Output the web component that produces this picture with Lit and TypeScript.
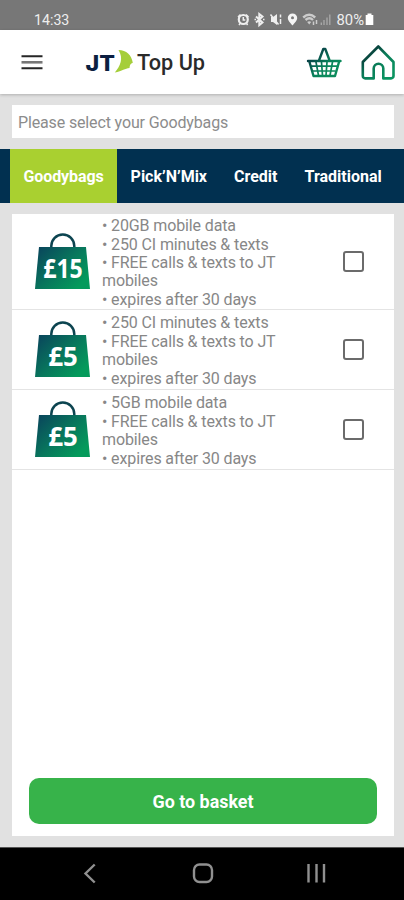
import { LitElement, html, css, svg } from "lit";
import { customElement, property, state } from "lit/decorators.js";
import { classMap } from "lit/directives/class-map.js";

interface Bag {
  price: string;
  lines: string[];
}

const TABS = [
  { id: "goody", label: "Goodybags" },
  { id: "mix", label: "Pick’N’Mix" },
  { id: "credit", label: "Credit" },
  { id: "trad", label: "Traditional" },
];

const BAGS: Bag[] = [
  { price: "£15", lines: ["20GB mobile data", "250 CI minutes & texts", "FREE calls & texts to JT mobiles", "expires after 30 days"] },
  { price: "£5", lines: ["250 CI minutes & texts", "FREE calls & texts to JT mobiles", "expires after 30 days"] },
  { price: "£5", lines: ["5GB mobile data", "FREE calls & texts to JT mobiles", "expires after 30 days"] },
];

@customElement("status-bar")
class StatusBar extends LitElement {
  static styles = css`
    :host { display: flex; height: 30px; box-sizing: border-box; padding: 9px 30px 0 34px; justify-content: space-between;
      background: #777; color: #eee; font: 14.2px/22px Roboto, sans-serif; }
    .right { display: flex; }
    .icons { display: block; margin-right: 5px; }
    .pct { font-size: 14.8px; }
    .battery { display: block; margin-left: 1px; }
  `;
  render() {
    return html`<span>14:33</span>
      <div class="right">
        <svg class="icons" width="97" height="20" viewBox="235 9 97 20" fill="none" stroke="#eee" stroke-width="1.5">
          <path d="M238 17 240.500 14.500M248.500 17 246 14.500" />
          <circle cx="243.300" cy="19.500" r="4.500" stroke-width="2.200" />
          <path d="M243.300 17v3h2M240 23.500l-1 1.500M246.600 23.500l1 1.500" />
          <path d="M256 16.500l6.500 6-3.200 2.700V14l3.200 2.500-6.500 6" stroke-width="2" />
          <path d="M254.500 19.500h1.500M263 19.500h1.500" />
          <path d="M271 17h2l4-3v11l-4-3h-2z" fill="#eee" stroke="none" />
          <path d="M270.500 14.500l8 10M280.500 14.500v3M280.500 19v5" />
          <path d="M292.500 13.400a4.700 4.700 0 0 0-4.700 4.700c0 3 4.700 7.400 4.700 7.400s4.700-4.400 4.700-7.400a4.700 4.700 0 0 0-4.700-4.700z" fill="#f4f4f4" stroke="none" />
          <circle cx="292.500" cy="17.800" r="1.500" fill="#777" stroke="none" />
          <g stroke="#ccc"><path d="M303.200 17.500q6-5.500 12 0M305.500 20q4-3.500 7.500 0" stroke-width="2.400" /><path d="M309.200 24.500l-2-2.500q2-1.500 4 0z" fill="#ccc" stroke="none" /><path d="M313.500 21.500v3.500M316.500 20v4" /></g>
          <g stroke="#aaa"><path d="M321.300 22.500v2.500M324 20v5M327 17.500v7.500M329.800 14.500v10.500" stroke-width="1.300" /></g>
        </svg>
        <span class="pct">80%</span>
        <svg class="battery" width="9" height="18" viewBox="0 0 9 18"><path d="M2.500 4.500h4v1.500H8.300V16H.7V6H2.500z" fill="#fff" /></svg>
      </div>`;
  }
}

@customElement("app-header")
class AppHeader extends LitElement {
  static styles = css`
    :host { display: flex; height: 64px; box-sizing: border-box; align-items: center; padding: 0 8px 0 21px; background: #fff;
      box-shadow: 0 1px 3px rgba(0, 0, 0, 0.22); position: relative; }
    svg { display: block; flex: none; }
    .menu { width: 22px; height: 16px; }
    .brand { display: flex; align-items: center; flex: 1; margin-left: 42px; }
    .title { font: 500 21.700px/30px Roboto, sans-serif; color: #2a2a2a; margin: 2px 0 0 2px; white-space: nowrap; }
    .home { margin-left: 18px; }
  `;
  render() {
    return html`
      <svg class="menu" viewBox="0 0 22 16"><path d="M.5 2.300h21M.5 14.300h21" stroke="#262626" stroke-width="2.100" /><path d="M.5 8.300h21" stroke="#777" stroke-width="2.600" /></svg>
      <div class="brand">
        <svg width="50" height="28" viewBox="85 48 50 28">
          <text x="85.500" y="70.500" font-family="Inter, sans-serif" font-weight="800" font-size="21" textLength="29.500" lengthAdjust="spacingAndGlyphs" fill="#0b1f41">JT</text>
          <path d="M118.500 50c8 0 13 5 14.300 12.800-2.300.7-3 2-3.300 5.200-4.500.4-7 3-14.700 4.600 5.500-6.500 9-14 3.700-22.600z" fill="#a5ce39" />
        </svg>
        <span class="title">Top Up</span>
      </div>
      <svg width="36" height="32" viewBox="306 46 36 32" fill="none" stroke="url(#bk)" stroke-width="2" stroke-linejoin="round" stroke-linecap="round">
        <defs><linearGradient id="bk" gradientUnits="userSpaceOnUse" x1="312" y1="50" x2="330" y2="70"><stop offset="0" stop-color="#072b3f" /><stop offset=".7" stop-color="#087e5a" /><stop offset="1" stop-color="#0b8a5b" /></linearGradient></defs>
        <path d="M308 61h32.500M309.500 62l4 14h21.500l4-14M319 60.500l4.300-11.500h2l4.300 11.500" stroke-width="2.400" />
        <path d="M311.500 66.200h25.500M313 71h22M316 62l2.500 13.500M321.500 62l1 13.500M327 62l-1 13.500M332.500 62l-2.500 13.500" stroke-width="1.700" />
      </svg>
      <svg class="home" width="36" height="38" viewBox="360 43 36 38" fill="none">
        <defs><linearGradient id="hm" gradientUnits="userSpaceOnUse" x1="364" y1="49" x2="388" y2="75"><stop offset="0" stop-color="#081f2c" /><stop offset=".5" stop-color="#0a7957" /><stop offset="1" stop-color="#0a9360" /></linearGradient></defs>
        <path d="M362.800 62 378.300 46.500 393.500 62V76a2.400 2.400 0 0 1-2.400 2.400H383.300V68.500a4.800 4.800 0 0 0-9.600 0V78.400h-8.500a2.400 2.400 0 0 1-2.400-2.400z" stroke="url(#hm)" stroke-width="2.600" stroke-linejoin="round" />
      </svg>`;
  }
}

@customElement("bag-row")
class BagRow extends LitElement {
  @property({ attribute: false }) bag!: Bag;
  @state() private checked = false;
  static styles = css`
    :host { display: flex; flex: none; height: 80px; box-sizing: border-box; align-items: center; padding: 0 30px 0 23px; border-bottom: 1px solid #e4e4e4;
      font: 16px/18.4px Roboto, sans-serif; letter-spacing: -0.13px; color: #878787; }
    .bag { display: block; flex: none; margin-bottom: 1px; letter-spacing: 0; }
    .list { list-style: none; margin: 3.500px 0 0 12px; padding: 0; width: 190px; }
    .box { margin-left: auto; width: 21px; height: 21px; box-sizing: border-box; border: 2px solid #6b6b6b; border-radius: 3px; background: #fff; }
    .on { background: #39b54a; }
  `;
  render() {
    const p = this.bag.price;
    return html`
      <svg class="bag" width="55" height="58" viewBox="0 0 55 58">
        <defs><linearGradient id="g" x1="0" y1=".1" x2=".9" y2=".8"><stop offset="0" stop-color="#09465c" /><stop offset=".55" stop-color="#08775c" /><stop offset="1" stop-color="#049a5b" /></linearGradient></defs>
        <path d="M16.300 15.500v-1.500a11.500 11.500 0 0 1 23 0v1.500" fill="none" stroke="#0c4450" stroke-width="2.500" />
        <path d="M4 15h47l4 42H0z" fill="url(#g)" />
        ${svg`<text x="28" y="45.500" text-anchor="middle" font-family="Noto Sans, sans-serif" font-weight="700" font-size="27" textLength=${p.length > 2 ? 39.5 : 29.5} lengthAdjust="spacingAndGlyphs" fill="#fff">${p}</text>`}
      </svg>
      <ul class="list">${this.bag.lines.map((l) => html`<li>• ${l}</li>`)}</ul>
      <div class=${classMap({ box: true, on: this.checked })} role="checkbox" aria-checked=${this.checked} @click=${() => (this.checked = !this.checked)}></div>`;
  }
}

@customElement("app-root")
class AppRoot extends LitElement {
  @state() private tab = "goody";
  static styles = css`
    :host { display: flex; flex-direction: column; height: 900px; background: #e1e1e1; font-family: Roboto, sans-serif; overflow: hidden; }
    .prompt { margin: 11px 10px 11px 12px; height: 33px; flex: none; box-sizing: border-box; padding: 1px 6px 0; background: #fff; font-size: 16px; line-height: 33px; letter-spacing: -0.14px; color: #8c8c8c; }
    .tabs { display: flex; flex: none; height: 54px; padding-left: 10px; background: #013050; }
    .tab { padding: 1px 13.500px 0; font-weight: 700; font-size: 16px; line-height: 54px; color: #fff; white-space: nowrap; }
    .active { background: #a9d030; letter-spacing: -0.1px; }
    .card { margin: 11px 10px 11px 12px; flex: 1; display: flex; flex-direction: column; background: #fff; }
    .first { height: 96px; }
    .go { margin: auto 17px 12px; height: 46px; border: 0; border-radius: 10px; background: #37b34a; color: #fff; font: 700 17.900px/46px Roboto, sans-serif; padding: 1px 0 0; }
    .nav { display: block; flex: none; background: #000; border-top: 1px solid #555; box-sizing: border-box; }
  `;
  render() {
    return html`
      <status-bar></status-bar>
      <app-header></app-header>
      <div class="prompt">Please select your Goodybags</div>
      <div class="tabs">${TABS.map((t) => html`<div class=${classMap({ tab: true, active: t.id === this.tab })} @click=${() => (this.tab = t.id)}>${t.label}</div>`)}</div>
      <div class="card">
        ${BAGS.map((b, i) => html`<bag-row class=${classMap({ first: i === 0 })} .bag=${b}></bag-row>`)}
        <button class="go">Go to basket</button>
      </div>
      <svg class="nav" width="404" height="53" viewBox="0 848 404 52" fill="none" stroke="#909090" stroke-width="2.400">
        <path d="M94.700 864.500 85.500 873.500 94.700 882.500" />
        <rect x="194" y="864.500" width="18" height="17.500" rx="5.500" />
        <path d="M308.500 864v18.500M316.500 864v18.500M324 864v18.500" />
      </svg>`;
  }
}
